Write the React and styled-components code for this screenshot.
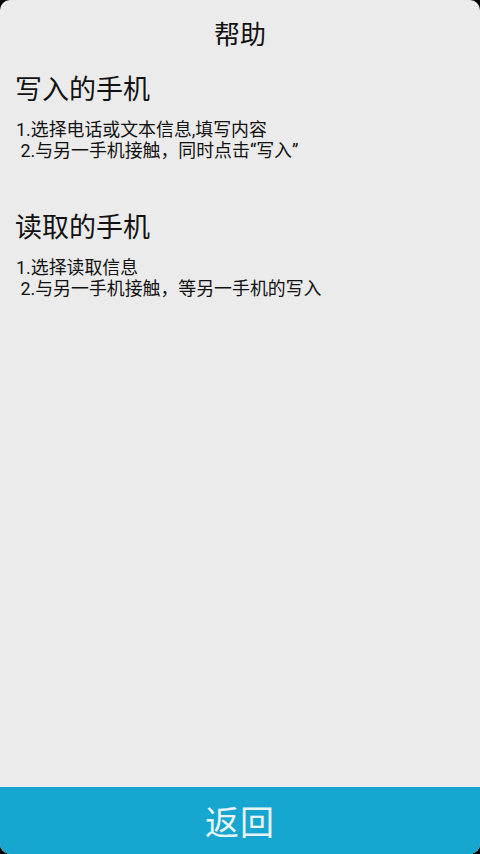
import React from "react";
import styled, { createGlobalStyle } from "styled-components";

const GlobalStyle = createGlobalStyle`
  html, body {
    margin: 0;
    padding: 0;
    background: #000;
  }
  #root {
    height: 854px;
  }
`;

const Screen = styled.div`
  width: 480px;
  height: 854px;
  display: flex;
  flex-direction: column;
  background: #ebebeb;
  border-radius: 10px;
  overflow: hidden;
  font-family: Roboto, "Noto Sans CJK SC", sans-serif;
  color: #111;
`;

const Title = styled.h1`
  margin: 0;
  padding-top: 18px;
  height: 53px;
  font-size: 26px;
  font-weight: 400;
  line-height: 34px;
  text-align: center;
`;

const Content = styled.div`
  flex: 1;
  padding: 0 15px;
`;

const Section = styled.section`
  margin-bottom: ${(p) => p.gap || 0}px;
`;

const Heading = styled.h2`
  margin: 0;
  font-size: 27px;
  font-weight: 400;
  line-height: 38px;
`;

const Steps = styled.div`
  margin-top: 10px;
  padding-left: 1px;
  font-size: 17.9px;
  line-height: 21px;
  white-space: pre;
`;

const Footer = styled.button`
  height: 67px;
  border: none;
  background: #17a6cf;
  color: #e8f4f8;
  font-family: "Noto Sans CJK SC", sans-serif;
  font-size: 34px;
  font-weight: 400;
  letter-spacing: 1px;
  padding: 0;
  cursor: pointer;
`;

export default function App() {
  return (
    <>
      <GlobalStyle />
      <Screen>
        <Title>帮助</Title>
        <Content>
          <Section gap={48}>
            <Heading>写入的手机</Heading>
            <Steps>
              {"1.选择电话或文本信息,填写内容\n 2.与另一手机接触，同时点击“写入”"}
            </Steps>
          </Section>
          <Section>
            <Heading>读取的手机</Heading>
            <Steps>
              {"1.选择读取信息\n 2.与另一手机接触，等另一手机的写入"}
            </Steps>
          </Section>
        </Content>
        <Footer>返回</Footer>
      </Screen>
    </>
  );
}
